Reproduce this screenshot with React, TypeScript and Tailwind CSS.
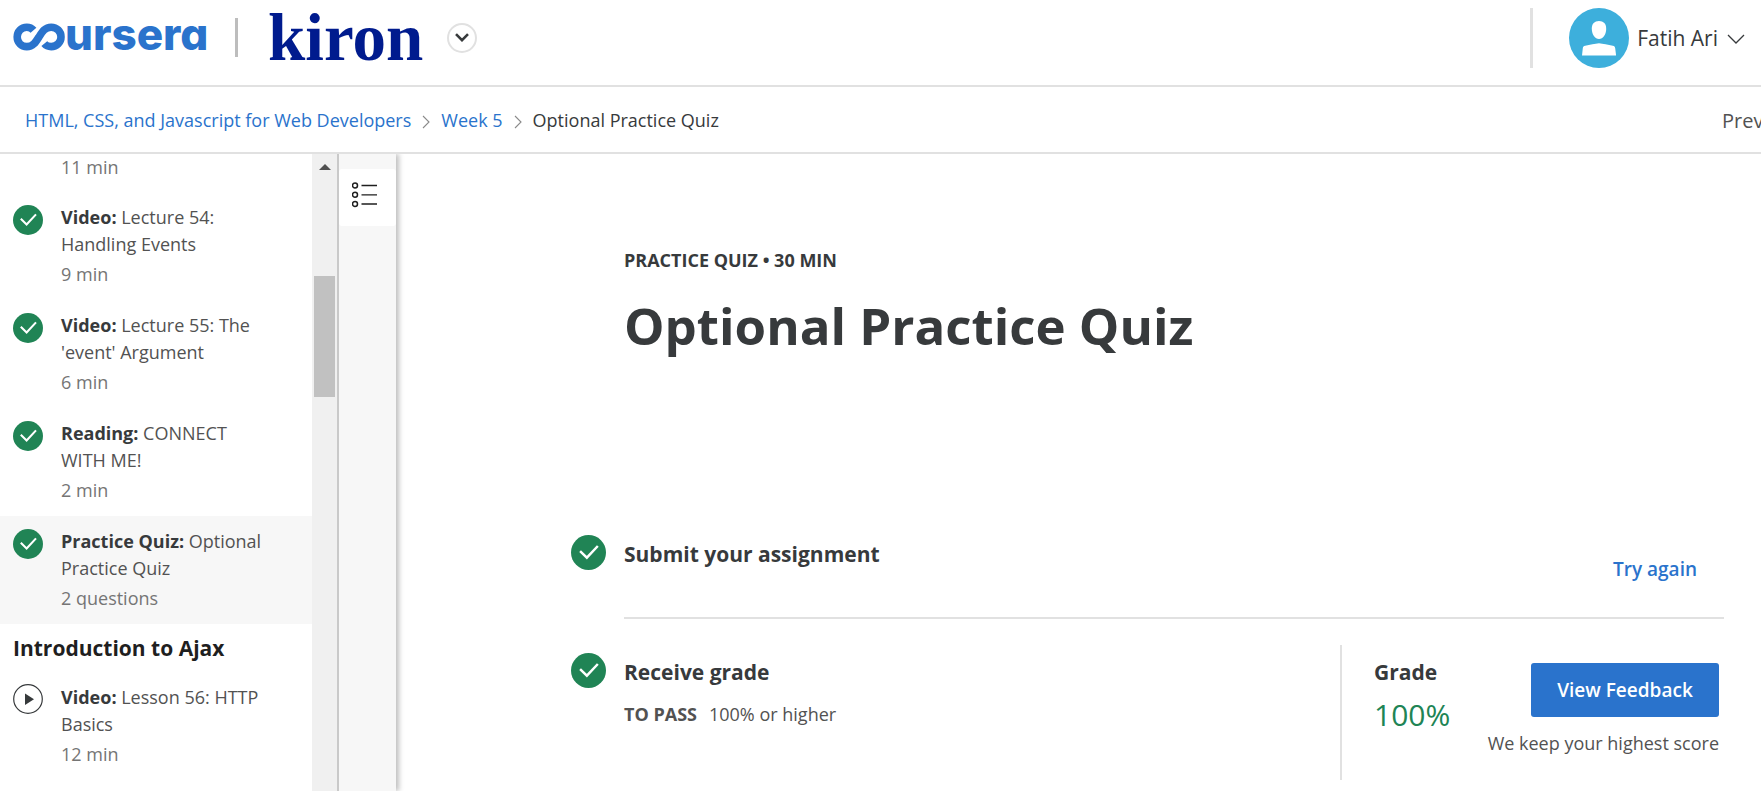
import React from "react";

type Item = { kind?: string; title?: string; meta: string; done: boolean; active?: boolean };

const lessons: Item[] = [
  { kind: "Video", title: "Lecture 54: Handling Events", meta: "9 min", done: true },
  { kind: "Video", title: "Lecture 55: The 'event' Argument", meta: "6 min", done: true },
  { kind: "Reading", title: "CONNECT WITH ME!", meta: "2 min", done: true },
  { kind: "Practice Quiz", title: "Optional Practice Quiz", meta: "2 questions", done: true, active: true },
];

const ajaxLessons: Item[] = [
  { kind: "Video", title: "Lesson 56: HTTP Basics", meta: "12 min", done: false },
];

function CheckCircle({ className }: { className: string }) {
  return (
    <svg viewBox="0 0 30 30" className={className} aria-label="Completed">
      <circle cx="15" cy="15" r="15" fill="#208455" />
      <path d="M7.8 13.800l5.800 5.600L23 9.400" fill="none" stroke="#fff" strokeWidth="2.100" />
    </svg>
  );
}

function PlayCircle({ className }: { className: string }) {
  return (
    <svg viewBox="0 0 30 30" className={className} aria-label="Not started">
      <circle cx="15" cy="15" r="14.3" fill="#fff" stroke="#373a3c" strokeWidth="1.2" />
      <path d="M12 9.5l9 5.8-9 5.8z" fill="#373a3c" />
    </svg>
  );
}

function LessonRow({ item }: { item: Item }) {
  return (
    <li>
      <a href="#" className={item.active ? "flex bg-[#f7f7f7] py-3 pr-10 pl-[13px]" : "flex py-3 pr-10 pl-[13px]"}>
        {item.done ? (
          <CheckCircle className="mt-px mr-[18px] size-[30px] shrink-0" />
        ) : (
          <PlayCircle className="mr-[18px] size-[30px] shrink-0" />
        )}
        <span className="block leading-[27px]">
          <span className="block">
            <span className="font-bold text-[#373a3c]">{item.kind}:</span> {item.title}
          </span>
          <span className="mt-[3px] block text-[#757575]">{item.meta}</span>
        </span>
      </a>
    </li>
  );
}

function CourseraLogo() {
  return (
    <a href="#" aria-label="Coursera home">
      <svg viewBox="0 -6 200 56" className="h-14 w-[200px]">
        <path
          d="M20.500 11.200C18.800 9.200 16.500 8.200 13.800 8.200C8.200 8.200 4.200 12.500 4.200 17.900C4.200 23.300 8.200 27.600 13.800 27.600C20 27.600 22.800 23 26 17.900S32 8.200 38.200 8.200C43.800 8.200 48 12.500 48 17.900C48 23.300 43.800 27.600 38.200 27.600C35.500 27.600 33 26.600 31.300 24.600"
          transform="translate(0 3)"
          fill="none"
          stroke="#2a73cc"
          strokeWidth="7.600"
        />
        <text x="52" y="34" className="font-['Inter',sans-serif] text-[44px] font-extrabold [font-feature-settings:'cv11']" fill="#2a73cc">
          ursera
        </text>
      </svg>
    </a>
  );
}

function Chevron() {
  return (
    <svg viewBox="0 0 8 14" className="mt-0.5 h-3.5 w-2" fill="none" stroke="#8a8a8a" strokeWidth="1.1">
      <path d="M1 1l6 6-6 6" />
    </svg>
  );
}

export default function App() {
  return (
    <div className="flex h-screen flex-col overflow-hidden bg-white font-['Open_Sans',sans-serif] text-[18px] text-[#525252]">
      <header className="flex h-[87px] shrink-0 items-start justify-between border-b-2 border-[#e1e1e1] pr-4 pl-[13px]">
        <div className="flex h-[75px] items-center">
          <CourseraLogo />
          <div className="ml-[22px] h-[39px] w-[3px] bg-[#bdbdbd]" />
          <a href="#" className="ml-[30px] font-['Liberation_Serif',serif] text-[67px] leading-[75px] font-bold text-[#001b8e]">
            kiron
          </a>
          <button aria-label="Switch program" className="ml-6 grid size-[30px] place-items-center rounded-full border-2 border-[#e1e1e1]">
            <svg viewBox="0 0 14 9" className="h-[9px] w-3.5" fill="none" stroke="#373a3c" strokeWidth="2.6">
              <path d="M1 1.200l6 6 6-6" />
            </svg>
          </button>
        </div>
        <div className="flex h-[76px] items-center">
          <div className="h-[60px] w-[3px] bg-[#e1e1e1]" />
          <button className="ml-9 flex items-center text-[21px] text-[#373a3c]">
            <svg viewBox="0 0 60 60" className="size-[60px]">
              <circle cx="30" cy="30" r="30" fill="#3dafdc" />
              <path d="M30 13c4.500 0 7.200 2.800 7.200 7.500C37.200 26.500 34 31 30 31s-7.200-4.500-7.200-10.500C22.800 15.800 25.500 13 30 13z" fill="#fff" />
              <path d="M13 47.500l.8-7.200c.2-1.600.9-2.300 2.400-2.600C21 36.500 26 35.900 30 35.200c4 .7 9 1.300 13.800 2.500 1.500.3 2.200 1 2.400 2.600l.9 7.200z" fill="#fff" />
            </svg>
            <span className="ml-2 pt-0.5">Fatih Ari</span>
            <svg viewBox="0 0 18 10" className="mt-0.5 ml-[9px] h-2.5 w-[18px]" fill="none" stroke="#373a3c" strokeWidth="1.300">
              <path d="M1 1l8 8 8-8" />
            </svg>
          </button>
        </div>
      </header>

      <nav aria-label="Breadcrumb" className="flex h-[67px] shrink-0 items-center justify-between border-b-2 border-[#e1e1e1] pt-0.5 pl-[25px]">
        <ol className="flex items-center">
          <li><a href="#" className="text-[#2a73cc]">HTML, CSS, and Javascript for Web Developers</a></li>
          <li className="mx-[11px]"><Chevron /></li>
          <li><a href="#" className="text-[#2a73cc]">Week 5</a></li>
          <li className="mx-[11px]"><Chevron /></li>
          <li className="text-[#373a3c]">Optional Practice Quiz</li>
        </ol>
        <a href="#" className="w-[39px] overflow-hidden text-[20px] whitespace-nowrap">Prev</a>
      </nav>

      <div className="flex min-h-0 flex-1 overflow-hidden">
        <aside className="relative z-10 flex w-[339px] shrink-0 border-r-2 border-[#c9c9c9] bg-white">
          <div className="flex-1 overflow-hidden">
            <p className="pb-[11px] pl-[61px] leading-[27px] text-[#757575]">11 min</p>
            <ul>
              {lessons.map((item) => <LessonRow key={item.title} item={item} />)}
            </ul>
            <h2 className="pt-[11px] pb-2.5 pl-[13px] text-[21px] leading-[27px] font-bold text-[#1f1f1f]">Introduction to Ajax</h2>
            <ul>
              {ajaxLessons.map((item) => <LessonRow key={item.title} item={item} />)}
            </ul>
          </div>
          <div className="w-[25px] bg-[#f0f0f0] px-0.5 pt-2.5">
            <svg viewBox="0 0 12 6" className="mx-auto h-1.5 w-3"><path d="M6 0l6 6H0z" fill="#505050" /></svg>
            <div className="mt-[106px] h-[121px] bg-[#c1c1c1]" />
          </div>
        </aside>

        <div className="w-[57px] shrink-0 bg-[#f7f7f7] pt-[15px] shadow-[3px_0_5px_0_rgba(0,0,0,0.25)]">
          <button aria-label="Toggle course outline" className="flex h-[57px] w-full rounded-[3px] bg-white pt-[13px] pl-[13px]">
            <svg viewBox="0 0 26 26" className="size-[26px]" fill="none" stroke="#1f1f1f">
              <g strokeWidth="1.500">
                <circle cx="3" cy="3.500" r="2.500" />
                <circle cx="3" cy="12.800" r="2.500" />
                <circle cx="3" cy="22" r="2.500" />
              </g>
              <path d="M9.500 3.500H25M9.500 12.800H25M9.500 22H25" strokeWidth="1.300" />
            </svg>
          </button>
        </div>

        <main className="min-w-0 flex-1 overflow-hidden pt-[93px] pr-[37px] pl-[175px]">
          <div className="pl-[53px] text-[#373a3c]">
            <p className="leading-[27px] font-bold">PRACTICE QUIZ • 30 MIN</p>
            <h1 className="mt-[15px] text-[51px] leading-[72px] font-bold">Optional Practice Quiz</h1>
          </div>

          <section className="mt-[174px] flex">
            <CheckCircle className="mr-[18px] size-[35px] shrink-0" />
            <div className="flex h-[84px] flex-1 justify-between border-b-2 border-[#e1e1e1] pr-[27px]">
              <h2 className="pt-1 text-[21px] leading-[30px] font-bold text-[#373a3c]">Submit your assignment</h2>
              <button className="mt-[19px] h-[30px] text-[19px] leading-[30px] font-semibold text-[#2a73cc]">Try again</button>
            </div>
          </section>

          <section className="flex pt-[26px]">
            <CheckCircle className="mt-2 mr-[18px] size-[35px] shrink-0" />
            <div className="flex-1 pt-3">
              <h2 className="text-[21px] leading-[30px] font-bold text-[#373a3c]">Receive grade</h2>
              <p className="mt-[14px] leading-[27px]"><span className="mr-3 font-bold">TO PASS</span>100% or higher</p>
            </div>
            <div className="flex h-[135px] w-[384px] justify-between border-l-2 border-[#e1e1e1] pr-[5px] pl-8">
              <div className="pt-3">
                <h3 className="text-[21px] leading-[30px] font-bold text-[#373a3c]">Grade</h3>
                <p className="mt-[7px] text-[30px] leading-[42px] text-[#208455]">100%</p>
              </div>
              <div className="flex flex-col items-end pt-[18px]">
                <button className="h-[54px] w-[188px] rounded-[3px] bg-[#2a73cc] text-[19px] font-semibold text-white">View Feedback</button>
                <p className="mt-[13px] leading-[27px]">We keep your highest score</p>
              </div>
            </div>
          </section>
        </main>
      </div>
    </div>
  );
}
